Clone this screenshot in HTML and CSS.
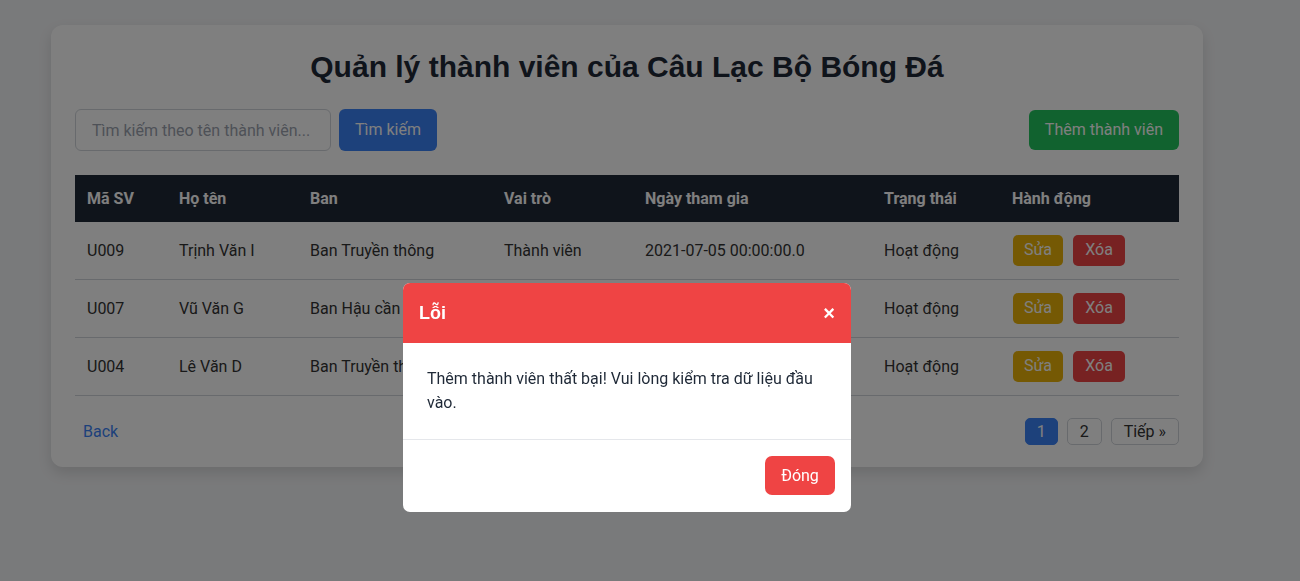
FILE: index.html
```html
<!DOCTYPE html>
<html lang="vi">
<head>
<meta charset="utf-8">
<title>Quản lý thành viên</title>
<link rel="stylesheet" href="styles.css">
</head>
<body>
<div class="card">
  <h1 class="title">Quản lý thành viên của Câu Lạc Bộ Bóng Đá</h1>
  <div class="toolbar">
    <div class="search">
      <input class="search-input" type="text" placeholder="Tìm kiếm theo tên thành viên...">
      <button class="btn btn-blue">Tìm kiếm</button>
    </div>
    <button class="btn btn-green">Thêm thành viên</button>
  </div>
  <table class="table">
    <thead>
      <tr>
        <th class="c-id">Mã SV</th>
        <th class="c-name">Họ tên</th>
        <th class="c-dept">Ban</th>
        <th class="c-role">Vai trò</th>
        <th class="c-date">Ngày tham gia</th>
        <th class="c-status">Trạng thái</th>
        <th class="c-act">Hành động</th>
      </tr>
    </thead>
    <tbody>
      <tr>
        <td>U009</td><td>Trịnh Văn I</td><td>Ban Truyền thông</td><td>Thành viên</td><td>2021-07-05 00:00:00.0</td><td>Hoạt động</td>
        <td><div class="actions"><button class="sbtn sbtn-edit">Sửa</button><button class="sbtn sbtn-del">Xóa</button></div></td>
      </tr>
      <tr>
        <td>U007</td><td>Vũ Văn G</td><td>Ban Hậu cần</td><td>Thành viên</td><td>2021-07-05 00:00:00.0</td><td>Hoạt động</td>
        <td><div class="actions"><button class="sbtn sbtn-edit">Sửa</button><button class="sbtn sbtn-del">Xóa</button></div></td>
      </tr>
      <tr>
        <td>U004</td><td>Lê Văn D</td><td>Ban Truyền thông</td><td>Thành viên</td><td>2021-07-05 00:00:00.0</td><td>Hoạt động</td>
        <td><div class="actions"><button class="sbtn sbtn-edit">Sửa</button><button class="sbtn sbtn-del">Xóa</button></div></td>
      </tr>
    </tbody>
  </table>
  <div class="footer">
    <a class="back" href="#">Back</a>
    <div class="pager">
      <button class="pbtn pbtn-active">1</button>
      <button class="pbtn">2</button>
      <button class="pbtn">Tiếp »</button>
    </div>
  </div>
</div>

<div class="overlay">
  <div class="modal">
    <div class="modal-header">
      <span class="modal-title">Lỗi</span>
      <span class="modal-close">×</span>
    </div>
    <div class="modal-body">Thêm thành viên thất bại! Vui lòng kiểm tra dữ liệu đầu vào.</div>
    <div class="modal-footer">
      <button class="btn-close">Đóng</button>
    </div>
  </div>
</div>
</body>
</html>
```

FILE: styles.css
```css
* { box-sizing: border-box; }
html, body { margin: 0; padding: 0; }
body {
  background: #f3f4f6;
  font-family: Roboto, "Liberation Sans", Arial, sans-serif;
  font-size: 16px;
  color: #333;
  min-height: 581px;
}
.card {
  width: 1152px;
  margin: 25px 0 0 51px;
  background: #fff;
  border-radius: 12px;
  padding: 24px 24px 22px;
  box-shadow: 0 6px 14px rgba(0,0,0,0.12);
}
.title {
  margin: 0 0 24px;
  text-align: center;
  font-family: "Liberation Sans", Arial, sans-serif;
  font-size: 30px;
  line-height: 36px;
  font-weight: bold;
  color: #1f2937;
}
.toolbar {
  display: flex;
  justify-content: space-between;
  align-items: center;
  margin-bottom: 24px;
}
.search { display: flex; gap: 8px; align-items: center; }
.search-input {
  width: 256px;
  height: 42px;
  border: 1px solid #d1d5db;
  border-radius: 6px;
  padding: 0 16px;
  font-family: Roboto, sans-serif;
  font-size: 16px;
  color: #333;
  outline: none;
}
.search-input::placeholder { color: #9ca3af; }
.btn {
  height: 42px;
  border: none;
  border-radius: 6px;
  padding: 0 16px 2px;
  font-family: Roboto, sans-serif;
  font-size: 16px;
  color: #fff;
}
.btn-blue { background: #3b82f6; }
.btn-green { background: #22c55e; height: 40px; }

.table {
  width: 1104px;
  border-collapse: collapse;
  table-layout: fixed;
}
.table th {
  background: #1f2937;
  color: #fff;
  text-align: left;
  font-weight: bold;
  padding: 14px 12px;
  line-height: 19px;
}
.table td {
  padding: 13px 12px;
  line-height: 19px;
  border-bottom: 1px solid #d1d5db;
  color: #333;
  white-space: nowrap;
}
.c-id { width: 92px; }
.c-name { width: 131px; }
.c-dept { width: 194px; }
.c-role { width: 141px; }
.c-date { width: 239px; }
.c-status { width: 128px; }
.c-act { width: 179px; }
.actions { display: flex; gap: 10px; margin-left: 1px; }
.sbtn {
  height: 31px;
  border: none;
  border-radius: 5px;
  padding: 0 0 2px;
  font-family: Roboto, sans-serif;
  font-size: 16px;
  color: #fff;
}
.sbtn-edit { background: #eab308; width: 50px; }
.sbtn-del { background: #ef4444; width: 52px; }

.footer {
  display: flex;
  justify-content: space-between;
  align-items: center;
  margin-top: 22px;
}
.back {
  color: #3b82f6;
  text-decoration: none;
  padding: 0 8px;
  font-size: 16px;
}
.pager { display: flex; gap: 9px; }
.pbtn {
  height: 27px;
  padding: 0 12px;
  border: 1px solid #d1d5db;
  border-radius: 5px;
  background: #fff;
  font-family: Roboto, sans-serif;
  font-size: 16px;
  color: #333;
}
.pbtn-active { background: #3b82f6; border-color: #3b82f6; color: #fff; width: 33px; padding: 0; }

.overlay {
  position: fixed;
  inset: 0;
  background: rgba(0,0,0,0.5);
  display: flex;
  justify-content: center;
  align-items: flex-start;
  padding: 283px 46px 0 0;
}
.modal {
  width: 448px;
  background: #fff;
  border-radius: 7px;
  overflow: hidden;
}
.modal-header {
  background: #ef4444;
  color: #fff;
  height: 60px;
  padding: 0 16px;
  display: flex;
  justify-content: space-between;
  align-items: center;
}
.modal-title {
  font-family: "Liberation Sans", Arial, sans-serif;
  font-weight: bold;
  font-size: 18px;
}
.modal-close {
  font-family: "Liberation Sans", Arial, sans-serif;
  font-weight: bold;
  font-size: 20px;
  padding-right: 0;
}
.modal-body {
  padding: 24px;
  line-height: 24px;
  color: #1f2937;
  font-size: 16px;
  border-bottom: 1px solid #e5e7eb;
}
.modal-footer {
  display: flex;
  justify-content: flex-end;
  padding: 16px 16px 17px;
}
.btn-close {
  height: 39px;
  width: 70px;
  border: none;
  border-radius: 7px;
  background: #ef4444;
  color: #fff;
  font-family: Roboto, sans-serif;
  font-size: 16px;
}
```
